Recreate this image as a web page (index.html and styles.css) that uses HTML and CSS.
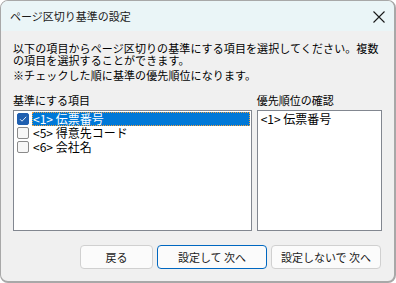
FILE: index.html
```html
<!DOCTYPE html>
<html lang="ja">
<head>
<meta charset="utf-8">
<link rel="stylesheet" href="styles.css">
</head>
<body>
<div class="window">
  <div class="titlebar">
    <span class="title">ページ区切り基準の設定</span>
    <svg class="close" width="12" height="12" viewBox="0 0 12 12"><path d="M0.5 0.5 L11.5 11.5 M11.5 0.5 L0.5 11.5" stroke="#1a1a1a" stroke-width="1.1" fill="none"/></svg>
  </div>
  <div class="content">
    <p class="desc">以下の項目からページ区切りの基準にする項目を選択してください。複数の項目を選択することができます。</p>
    <p class="desc note">※チェックした順に基準の優先順位になります。</p>
    <div class="lists">
      <div class="col col-left">
        <div class="label">基準にする項目</div>
        <div class="listbox">
          <div class="item selected"><span class="cb checked"><svg width="12" height="12" viewBox="0 0 12 12"><path d="M3 6.2 L5 8.2 L9.2 3.8" stroke="#dce9f7" stroke-width="1" fill="none"/></svg></span><span class="txt">&lt;1&gt; 伝票番号</span></div>
          <div class="item"><span class="cb"></span><span class="txt">&lt;5&gt; 得意先コード</span></div>
          <div class="item"><span class="cb"></span><span class="txt">&lt;6&gt; 会社名</span></div>
        </div>
      </div>
      <div class="col col-right">
        <div class="label">優先順位の確認</div>
        <div class="listbox">
          <div class="ritem">&lt;1&gt; 伝票番号</div>
        </div>
      </div>
    </div>
    <div class="buttons">
      <button class="btn btn-back">戻る</button>
      <button class="btn btn-wide btn-default">設定して 次へ</button>
      <button class="btn btn-wide">設定しないで 次へ</button>
    </div>
  </div>
</div>
</body>
</html>
```
FILE: styles.css
```css
* { box-sizing: border-box; }
html, body { margin: 0; padding: 0; background: #ffffff; }
body {
  font-family: "Noto Sans CJK JP", "Noto Sans", sans-serif;
  font-size: 11px;
  color: #000;
}
.window {
  width: 396px;
  height: 283px;
  border: 1px solid #a8a8a8;
  border-right-width: 2px;
  border-bottom-width: 2px;
  border-radius: 8px;
  overflow: hidden;
  background: #f0f0f0;
  display: flex;
  flex-direction: column;
}
.titlebar {
  height: 30px;
  background: #eaf5f7;
  display: flex;
  align-items: center;
  justify-content: space-between;
  padding: 0 9px 0 9px;
  flex: none;
}
.title { font-size: 11px; line-height: 14px; color: #1a1a1a; }
.close { display: block; margin-top: 1px; }
.content {
  flex: 1;
  padding: 11px 12px 0 12px;
  display: flex;
  flex-direction: column;
}
.desc {
  margin: 0;
  line-height: 12px;
  letter-spacing: 0.1px;
}
.note { margin-top: 3px; }
.lists {
  display: flex;
  gap: 5px;
  margin-top: 13px;
}
.label { line-height: 13px; margin-bottom: 3px; }
.col-left { width: 240px; }
.col-right { width: 126px; }
.listbox {
  height: 121px;
  background: #ffffff;
  border: 1px solid #828790;
  padding: 1px 1px;
}
.item {
  height: 14px;
  display: flex;
  align-items: center;
  font-size: 12px;
  line-height: 14px;
}
.cb {
  width: 12px;
  height: 12px;
  margin: 0 3px 0 2px;
  border: 1px solid #8a8a8a;
  border-radius: 2px;
  background: #f7f7f7;
  flex: none;
  display: flex;
}
.cb.checked {
  background: #1f5fb0;
  border-color: #1f5fb0;
}
.cb svg { display: block; margin: -1px; }
.txt {
  flex: 1;
  height: 14px;
  padding-left: 1px;
  white-space: nowrap;
}
.selected .txt {
  background: #0078d7;
  color: #ffffff;
  outline: 1px dotted #f0a040;
  outline-offset: -1px;
}
.ritem {
  font-size: 12px;
  line-height: 14px;
  padding-left: 2px;
  white-space: nowrap;
}
.buttons {
  display: flex;
  justify-content: flex-end;
  gap: 4px;
  margin-top: 14px;
  padding-right: 1px;
}
.btn {
  height: 24px;
  font-family: "Noto Sans CJK JP", "Noto Sans", sans-serif;
  font-size: 11px;
  background: #fbfbfb;
  border: 1px solid #d0d0d0;
  border-radius: 4px;
  color: #1a1a1a;
  padding: 0;
  line-height: 20px;
}
.btn-back { width: 73px; }
.btn-wide { width: 110px; }
.btn-default { border-color: #0067c0; }
```
